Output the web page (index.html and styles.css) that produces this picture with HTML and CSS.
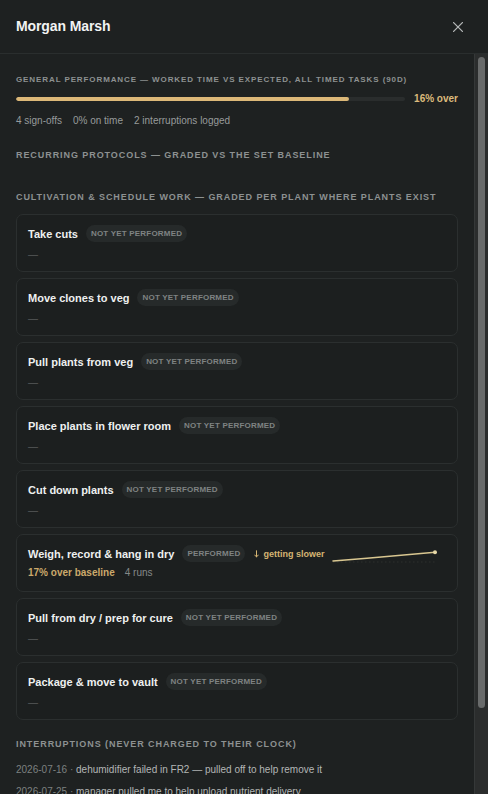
FILE: index.html
```html
<!DOCTYPE html>
<html lang="en">
<head>
<meta charset="utf-8">
<title>Morgan Marsh</title>
<link rel="stylesheet" href="styles.css">
</head>
<body>
<div class="panel">
  <header class="head">
    <h1 class="name">Morgan Marsh</h1>
    <button class="close" aria-label="Close">
      <svg viewBox="0 0 10 10" width="10" height="10"><path d="M0.6 0.6 L9.4 9.4 M9.4 0.6 L0.6 9.4" stroke="currentColor" stroke-width="1.3" stroke-linecap="round" fill="none"/></svg>
    </button>
  </header>
  <div class="viewport">
    <main class="body">
      <section class="sec sec-general">
        <h2 class="label label-sm">General performance — worked time vs expected, all timed tasks (90d)</h2>
        <div class="meter-row">
          <div class="meter"><div class="meter-fill" style="width:85.7%"></div></div>
          <span class="meter-val">16% over</span>
        </div>
        <div class="stats">
          <span>4 sign-offs</span>
          <span>0% on time</span>
          <span>2 interruptions logged</span>
        </div>
      </section>

      <section class="sec sec-recurring">
        <h2 class="label">Recurring protocols — graded vs the set baseline</h2>
      </section>

      <section class="sec sec-cult">
        <h2 class="label">Cultivation &amp; schedule work — graded per plant where plants exist</h2>
        <div class="cards">
          <div class="card">
            <div class="card-row"><span class="card-title">Take cuts</span><span class="pill">Not yet performed</span></div>
            <div class="card-sub"><span class="dash">—</span></div>
          </div>
          <div class="card">
            <div class="card-row"><span class="card-title">Move clones to veg</span><span class="pill">Not yet performed</span></div>
            <div class="card-sub"><span class="dash">—</span></div>
          </div>
          <div class="card">
            <div class="card-row"><span class="card-title">Pull plants from veg</span><span class="pill">Not yet performed</span></div>
            <div class="card-sub"><span class="dash">—</span></div>
          </div>
          <div class="card">
            <div class="card-row"><span class="card-title">Place plants in flower room</span><span class="pill">Not yet performed</span></div>
            <div class="card-sub"><span class="dash">—</span></div>
          </div>
          <div class="card">
            <div class="card-row"><span class="card-title">Cut down plants</span><span class="pill">Not yet performed</span></div>
            <div class="card-sub"><span class="dash">—</span></div>
          </div>
          <div class="card card-done">
            <div class="card-row">
              <span class="card-title">Weigh, record &amp; hang in dry</span>
              <span class="pill">Performed</span>
              <span class="trend"><svg class="arrow" viewBox="0 0 6 9" width="5" height="8"><path d="M3 0.6 V8 M0.8 5.7 L3 8 L5.2 5.7" stroke="currentColor" stroke-width="1.2" fill="none" stroke-linecap="round" stroke-linejoin="round"/></svg>getting slower</span>
              <svg class="spark" viewBox="0 0 100 17" width="100" height="17">
                <line x1="-4" y1="17" x2="100" y2="17" class="spark-base"/>
                <polyline points="-4,16 30,13.2 64,10.3 98,7.2" class="spark-line"/>
                <circle cx="98" cy="7.2" r="2" class="spark-dot"/>
              </svg>
            </div>
            <div class="card-sub"><span class="over">17% over baseline</span><span class="runs">4 runs</span></div>
          </div>
          <div class="card">
            <div class="card-row"><span class="card-title">Pull from dry / prep for cure</span><span class="pill">Not yet performed</span></div>
            <div class="card-sub"><span class="dash">—</span></div>
          </div>
          <div class="card">
            <div class="card-row"><span class="card-title">Package &amp; move to vault</span><span class="pill">Not yet performed</span></div>
            <div class="card-sub"><span class="dash">—</span></div>
          </div>
        </div>
      </section>

      <section class="sec sec-int">
        <h2 class="label">Interruptions (never charged to their clock)</h2>
        <ul class="int-list">
          <li><span class="date">2026-07-16 ·</span> dehumidifier failed in FR2 — pulled off to help remove it</li>
          <li><span class="date">2026-07-25 ·</span> manager pulled me to help unload nutrient delivery</li>
        </ul>
      </section>
    </main>
    <div class="scrollbar" aria-hidden="true"><div class="thumb"></div></div>
  </div>
</div>
</body>
</html>
```

FILE: styles.css
```css
* { box-sizing: border-box; }

html, body {
  margin: 0;
  padding: 0;
  height: 100%;
  background: #1e2121;
  overflow: hidden;
}

body {
  font-family: "Liberation Sans", Arial, Helvetica, sans-serif;
  color: #e9ebeb;
}

.panel {
  display: flex;
  flex-direction: column;
  height: 100vh;
  background: #1e2121;
}

.head {
  flex: 0 0 auto;
  height: 54px;
  display: flex;
  align-items: center;
  justify-content: space-between;
  padding: 0 25px 0 16px;
  border-bottom: 1px solid #2a2e2e;
}

.name {
  margin: 0;
  font-size: 14px;
  line-height: 18px;
  font-weight: 700;
  color: #f2f3f3;
  padding-bottom: 1px;
  letter-spacing: -0.1px;
}

.close {
  display: flex;
  align-items: center;
  justify-content: center;
  padding: 0;
  margin: 0;
  border: 0;
  background: none;
  color: #b3b6b6;
  width: 10px;
  height: 10px;
  cursor: pointer;
}

.viewport {
  flex: 1 1 auto;
  min-height: 0;
  display: flex;
}

.body {
  flex: 1 1 auto;
  min-width: 0;
  overflow: hidden;
  padding: 20px 16px 0 16px;
}

.scrollbar {
  flex: 0 0 14px;
  background: #2b2d2d;
  border-left: 1px solid #353838;
  padding: 3px 3px 0 3px;
}

.thumb {
  height: 651px;
  border-radius: 4px;
  background: #696b6b;
}

.sec { margin: 0; }

.label {
  margin: 0;
  font-size: 9px;
  line-height: 12px;
  font-weight: 700;
  text-transform: uppercase;
  letter-spacing: 0.93px;
  color: #8d9191;
  white-space: nowrap;
}

.label-sm {
  font-size: 8px;
  letter-spacing: 0.9px;
}

.meter-row {
  display: flex;
  align-items: center;
  gap: 9px;
  margin-top: 6px;
  height: 14px;
}

.meter {
  flex: 1 1 auto;
  height: 4px;
  border-radius: 2px;
  background: #2a2d2d;
  overflow: hidden;
}

.meter-fill {
  height: 100%;
  background: #dcb878;
  border-radius: 2px;
}

.meter-val {
  font-size: 10px;
  font-weight: 700;
  line-height: 14px;
  color: #dcba7c;
  white-space: nowrap;
}

.stats {
  display: flex;
  gap: 11px;
  margin-top: 8px;
  font-size: 10px;
  line-height: 14px;
  color: #979b9b;
}

.sec-recurring { margin-top: 21px; }
.sec-cult { margin-top: 30px; }

.cards {
  display: flex;
  flex-direction: column;
  gap: 6px;
  margin-top: 11px;
}

.card {
  border: 1px solid #2b2f2f;
  border-radius: 7px;
  background: #1c1f1f;
  padding: 10px 11px 9px 11px;
}

.card-row {
  display: flex;
  align-items: center;
  gap: 8px;
  height: 17px;
}

.card-title {
  font-size: 11px;
  line-height: 14px;
  font-weight: 700;
  color: #eef0f0;
  white-space: nowrap;
}

.pill {
  height: 17px;
  line-height: 17px;
  padding: 0 5px;
  border-radius: 9px;
  background: #262a2a;
  color: #7f8383;
  font-size: 8px;
  font-weight: 700;
  text-transform: uppercase;
  letter-spacing: 0.2px;
  white-space: nowrap;
}

.trend {
  display: inline-flex;
  align-items: center;
  gap: 4px;
  margin-left: 1px;
  font-size: 9px;
  font-weight: 700;
  color: #d6b573;
  white-space: nowrap;
}

.arrow { flex: 0 0 auto; }

.spark {
  margin-left: auto;
  margin-right: 9px;
  overflow: visible;
  flex: 0 0 auto;
}

.spark-base {
  stroke: #2c302e;
  stroke-width: 1;
  stroke-dasharray: 1.5 2.5;
}

.spark-line {
  fill: none;
  stroke: #d9c791;
  stroke-width: 1.5;
  stroke-linecap: round;
  stroke-linejoin: round;
}

.spark-dot { fill: #e6d7a6; }

.card-sub {
  display: flex;
  gap: 10px;
  margin-top: 6px;
  font-size: 10px;
  line-height: 14px;
}

.card-done { padding-bottom: 11px; }
.card-done .card-sub { margin-top: 4px; }

.dash { color: #565a5a; }

.over {
  color: #cba96b;
  font-weight: 700;
}

.runs { color: #858989; }

.sec-int { margin-top: 18px; }

.int-list {
  list-style: none;
  margin: 13px 0 0 0;
  padding: 0;
  display: flex;
  flex-direction: column;
  gap: 8px;
}

.int-list li {
  font-size: 10px;
  line-height: 14px;
  color: #b3b6b6;
  white-space: nowrap;
}

.date { color: #7c8080; }
```
